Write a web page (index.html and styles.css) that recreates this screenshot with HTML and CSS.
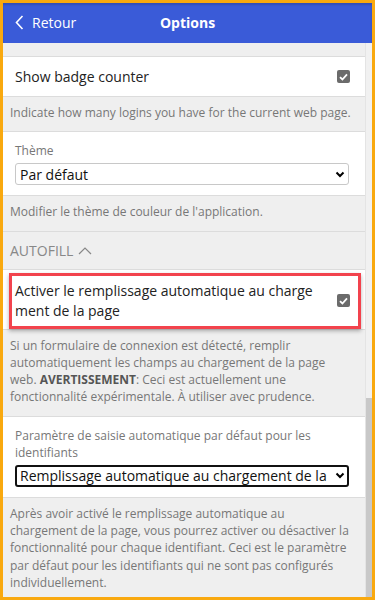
FILE: index.html
```html
<!DOCTYPE html>
<html lang="fr">
<head>
  <meta charset="UTF-8">
  <meta name="viewport" content="width=device-width, initial-scale=1.0">
  <title>Options</title>
  <link rel="stylesheet" href="styles.css">
</head>
<body>
  <div class="frame">

    <!-- Barre du haut -->
    <header class="topbar">
      <a class="back" href="#">
        <svg width="9" height="15" viewBox="0 0 9 15"><path d="M7.5 1 L1.5 7.5 L7.5 14" fill="none" stroke="#fff" stroke-width="1.6"/></svg>
        Retour
      </a>
      <h1>Options</h1>
      <span class="spacer"></span>
    </header>

    <div class="body">
      <main class="content">

        <div class="box row">
          <span>Show badge counter</span>
          <span class="check"><svg width="9" height="8" viewBox="0 0 9 8"><path d="M1 4.2 L3.4 6.5 L8 1.3" fill="none" stroke="#fff" stroke-width="1.8"/></svg></span>
        </div>
        <p class="help">Indicate how many logins you have for the current web page.</p>

        <div class="box field">
          <label>Thème</label>
          <div class="select">
            <span>Par défaut</span>
            <svg width="10" height="7" viewBox="0 0 10 7"><path d="M1.5 1.5 L5 5 L8.5 1.5" fill="none" stroke="#000" stroke-width="2"/></svg>
          </div>
        </div>
        <p class="help">Modifier le thème de couleur de l'application.</p>

        <div class="group">
          AUTOFILL
          <svg width="14" height="8" viewBox="0 0 14 8"><path d="M1 7 L7 1 L13 7" fill="none" stroke="#888" stroke-width="1.2"/></svg>
        </div>

        <div class="box">
          <div class="row mark">
            <span class="long">Activer le remplissage automatique au chargement de la page</span>
            <span class="check"><svg width="9" height="8" viewBox="0 0 9 8"><path d="M1 4.2 L3.4 6.5 L8 1.3" fill="none" stroke="#fff" stroke-width="1.8"/></svg></span>
          </div>
        </div>
        <p class="help">Si un formulaire de connexion est détecté, remplir automatiquement les champs au chargement de la page web. <b>AVERTISSEMENT</b>: Ceci est actuellement une fonctionnalité expérimentale. À utiliser avec prudence.</p>

        <div class="box field">
          <label>Paramètre de saisie automatique par défaut pour les identifiants</label>
          <div class="select focus">
            <span>Remplissage automatique au chargement de la page</span>
            <svg width="10" height="7" viewBox="0 0 10 7"><path d="M1.5 1.5 L5 5 L8.5 1.5" fill="none" stroke="#000" stroke-width="2"/></svg>
          </div>
        </div>
        <p class="help">Après avoir activé le remplissage automatique au chargement de la page, vous pourrez activer ou désactiver la fonctionnalité pour chaque identifiant. Ceci est le paramètre par défaut pour les identifiants qui ne sont pas configurés individuellement.</p>

      </main>

      <!-- Barre de défilement -->
      <div class="scrollbar">
        <div class="track"></div>
        <div class="thumb"></div>
      </div>
    </div>

  </div>
</body>
</html>
```

FILE: styles.css
```css
/* Base */
* { margin: 0; padding: 0; box-sizing: border-box; }
body {
  font-family: "Open Sans", "Liberation Sans", sans-serif;
  color: #222;
  background: #f9a90f;
}

.frame {
  height: 600px;
  border: 3px solid #f9a90f;
  background: #efefef;
  display: flex;
  flex-direction: column;
  overflow: hidden;
}

/* Barre du haut */
.topbar {
  height: 40px;
  flex: none;
  background: #3a5bd8;
  color: #fff;
  display: flex;
  align-items: center;
  padding: 0 12px 2px;
  box-shadow: inset 0 2px 2px rgba(0, 0, 0, 0.15);
}

.back {
  flex: 1;
  display: flex;
  align-items: center;
  gap: 8px;
  color: #fff;
  text-decoration: none;
  font-size: 14px;
}

.topbar h1 {
  font-size: 14px;
  font-weight: 700;
}

.spacer { flex: 1; }

/* Corps */
.body {
  flex: 1;
  display: flex;
  min-height: 0;
}

.content {
  flex: 1;
  padding-top: 13px;
  overflow: hidden;
}

.box {
  background: #fff;
  border-top: 1px solid #dcdcdc;
  border-bottom: 1px solid #dcdcdc;
}

.row {
  display: flex;
  align-items: center;
  justify-content: space-between;
  font-size: 14px;
  line-height: 20px;
}

.box.row {
  height: 41px;
  padding: 0 15px 0 12px;
}

.check {
  flex: none;
  width: 13px;
  height: 13px;
  border-radius: 2px;
  background: #6b6b6b;
  display: flex;
  align-items: center;
  justify-content: center;
  margin-left: 14px;
}

.help {
  font-size: 12px;
  line-height: 17.3px;
  color: #777;
  padding: 7px 12px 10px 7px;
}

.help b { color: #555; }

.field {
  padding: 10px 16px 10px 12px;
}

.field label {
  display: block;
  font-size: 12px;
  line-height: 17px;
  color: #777;
  margin-bottom: 4px;
}

.select {
  height: 22px;
  border: 1px solid #c8c8c8;
  border-radius: 3px;
  display: flex;
  align-items: center;
  padding: 0 3px 0 4px;
  font-size: 14px;
  color: #111;
}

.select span {
  flex: 1;
  white-space: nowrap;
  overflow: hidden;
}

.select svg { flex: none; margin-left: 5px; }

.select.focus {
  border: 2px solid #111;
  padding: 0 2px 0 3px;
}

.group {
  border-top: 1px solid #dcdcdc;
  padding: 9px 7px 8px;
  font-size: 14px;
  line-height: 20px;
  color: #888;
  display: flex;
  align-items: center;
  gap: 5px;
}

/* Encadré rouge */
.mark {
  margin: 3px 4px 0 6px;
  border: 3px solid #f2434d;
  padding: 5px 8px 5px 3px;
  box-shadow: 0 2px 4px rgba(0, 0, 0, 0.3);
}

.long {
  word-break: break-all;
}

.mark .check { margin-left: 20px; }

/* Barre de défilement */
.scrollbar {
  width: 7px;
  flex: none;
  display: flex;
  flex-direction: column;
  background: #f1f1f1;
  border-left: 1px solid #e4e4e4;
}

.track { height: 355px; flex: none; }

.thumb {
  flex: 1;
  background: #c8c8c8;
}
```
